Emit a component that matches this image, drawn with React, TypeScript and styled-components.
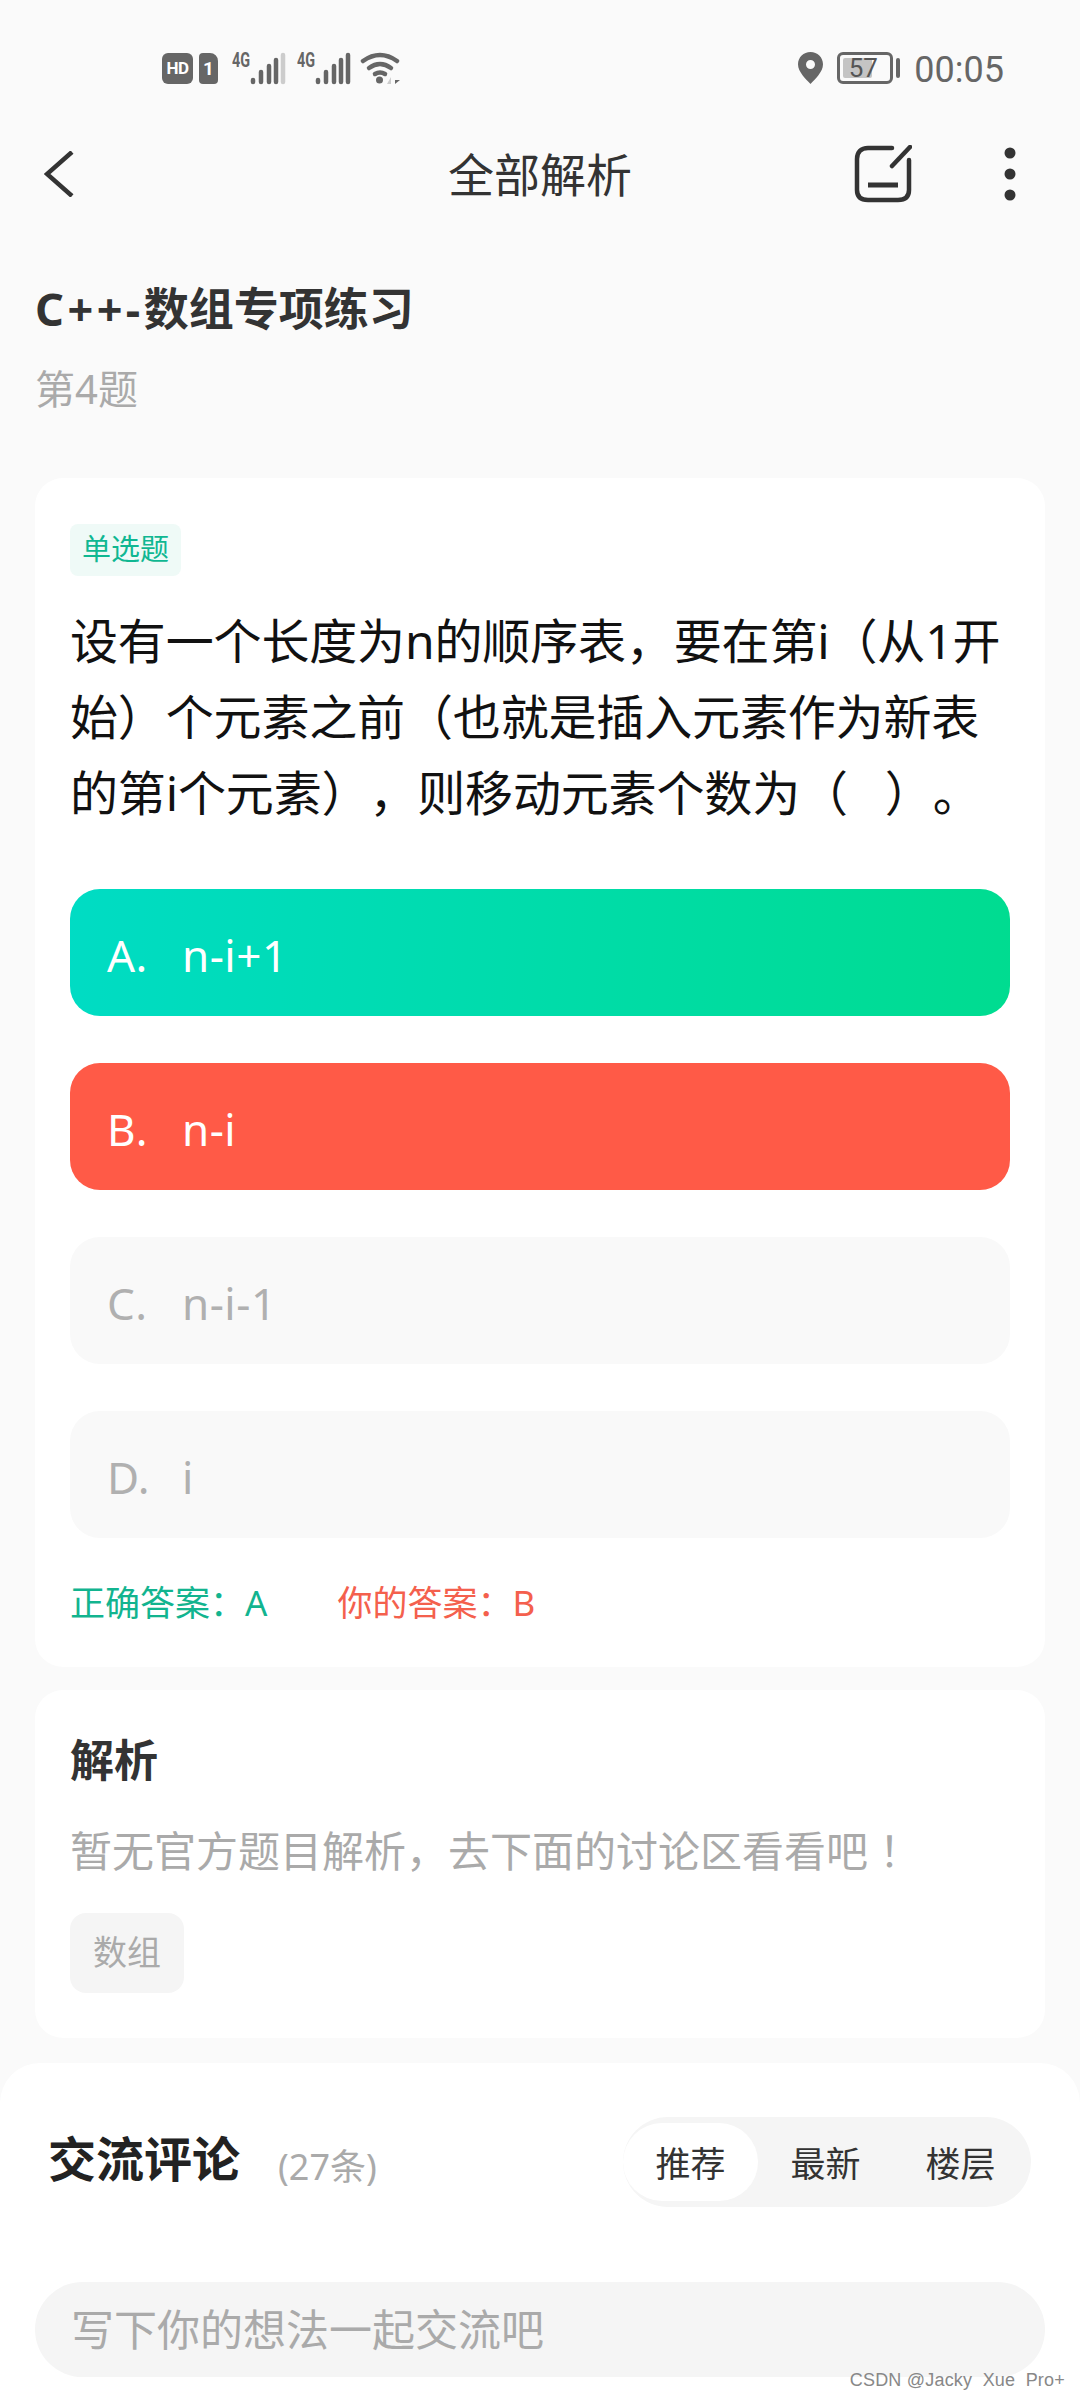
import * as React from 'react';
import styled, { createGlobalStyle } from 'styled-components';

const GlobalStyle = createGlobalStyle`
  html, body {
    margin: 0;
    padding: 0;
    background: #fafafa;
  }
  body {
    font-family: "Noto Sans", "Noto Sans CJK SC", sans-serif;
    text-spacing-trim: space-all;
  }
`;

const Page = styled.div`
  position: relative;
  width: 1080px;
  height: 2400px;
  overflow: hidden;
  background: #fafafa;
`;

const StatusBar = styled.div`
  display: flex;
  align-items: center;
  justify-content: space-between;
  height: 32px;
  padding: 52px 76px 0 162px;
  color: #666;
`;

const StatusGroup = styled.div`
  display: flex;
  align-items: center;
`;

const Clock = styled.span`
  margin-left: 14px;
  padding-top: 3px;
  font-family: Roboto, sans-serif;
  font-size: 36px;
  line-height: 32px;
  color: #666;
`;

const HdBadge = styled.span`
  display: flex;
  align-items: center;
  justify-content: center;
  width: 31px;
  height: 31px;
  border-radius: 6px;
  background: #666;
  color: #fff;
  font-family: Roboto, sans-serif;
  font-size: 17px;
  font-weight: 700;
  letter-spacing: -0.5px;
`;

const SimBadge = styled.span`
  display: flex;
  align-items: center;
  justify-content: center;
  width: 19px;
  height: 31px;
  margin-left: 6px;
  border-radius: 4px 8px 4px 4px;
  background: #666;
  color: #fff;
  font-family: Roboto, sans-serif;
  font-size: 19px;
  font-weight: 700;
`;

const Signal = styled.span<{ $gap: number }>`
  display: flex;
  align-items: flex-start;
  margin-left: ${(p) => p.$gap}px;
`;

const NetLabel = styled.span`
  display: inline-block;
  width: 18px;
  font-family: Roboto, sans-serif;
  font-size: 20px;
  line-height: 16px;
  font-weight: 700;
  color: #666;
  transform: scaleX(0.72);
  transform-origin: left top;
`;

const Battery = styled.span`
  position: relative;
  display: flex;
  align-items: center;
  justify-content: center;
  box-sizing: border-box;
  width: 56px;
  height: 32px;
  margin-left: 14px;
  border: 3px solid #666;
  border-radius: 6px;
  font-family: Roboto, sans-serif;
  font-size: 26px;
  color: #555;
`;

const BatteryFill = styled.span`
  position: absolute;
  left: 3px;
  top: 3px;
  bottom: 3px;
  border-radius: 2px;
  background: #c4c4c4;
`;

const BatteryValue = styled.span`
  position: relative;
  margin-right: 4px;
`;

const BatteryNub = styled.span`
  width: 4px;
  height: 20px;
  margin-left: 3px;
  border-radius: 2px;
  background: #666;
`;

const Header = styled.div`
  position: relative;
  display: flex;
  align-items: center;
  height: 60px;
  margin-top: 60px;
  padding: 0 44px;
`;

const HeaderTitle = styled.div`
  position: absolute;
  left: 0;
  right: 0;
  text-align: center;
  font-size: 46px;
  line-height: 60px;
  color: #333;
`;

const HeaderActions = styled.div`
  display: flex;
  align-items: center;
  margin-left: auto;
  gap: 91px;
  padding-right: 19px;
`;

const Intro = styled.div`
  padding: 0 35px;
  margin-top: 75px;
`;

const PaperTitle = styled.div`
  font-size: 45px;
  line-height: 60px;
  font-weight: 700;
  color: #333;
`;

const PaperPrefix = styled.span`
  letter-spacing: 3.5px;
`;

const PaperIndex = styled.div`
  margin-top: 25px;
  font-size: 40px;
  line-height: 50px;
  color: #aaa;
`;

const Card = styled.div`
  margin: 0 35px;
  padding: 46px 35px 35px;
  background: #fff;
  border-radius: 28px;
`;

const QuestionCard = styled(Card)`
  margin-top: 64px;
  height: 1189px;
  box-sizing: border-box;
`;

const TypeTag = styled.span`
  display: inline-block;
  padding: 0 12px;
  height: 52px;
  line-height: 50px;
  border-radius: 8px;
  background: #effaf7;
  color: #10b792;
  font-size: 29px;
`;

const Question = styled.div`
  margin-top: 27px;
  font-size: 48px;
  line-height: 76px;
  letter-spacing: -0.15px;
  color: #111;
`;

const Options = styled.div`
  display: flex;
  flex-direction: column;
  gap: 47px;
  margin-top: 58px;
`;

const Option = styled.div<{ $state: 'right' | 'wrong' | 'idle' }>`
  display: flex;
  align-items: center;
  box-sizing: border-box;
  height: 127px;
  padding: 5px 37px 0;
  border-radius: 30px;
  font-size: 44px;
  letter-spacing: 0.5px;
  color: ${(p) => (p.$state === 'idle' ? '#b0b0b0' : '#fff')};
  background: ${(p) =>
    p.$state === 'right'
      ? 'linear-gradient(95deg, #00dcc4, #00dc90)'
      : p.$state === 'wrong'
        ? '#ff5a47'
        : '#f9f9f9'};
`;

const OptionKey = styled.span`
  width: 75px;
`;

const Answers = styled.div`
  display: flex;
  margin-top: 40px;
  font-size: 35px;
  line-height: 50px;
`;

const AnswerText = styled.span<{ $wrong?: boolean }>`
  margin-right: ${(p) => (p.$wrong ? 0 : 70)}px;
  color: ${(p) => (p.$wrong ? '#f4604d' : '#12b48f')};
`;

const AnalysisCard = styled(Card)`
  margin-top: 23px;
  height: 348px;
  box-sizing: border-box;
  padding-top: 40px;
`;

const AnalysisTitle = styled.div`
  font-size: 44px;
  line-height: 60px;
  font-weight: 700;
  color: #333;
`;

const AnalysisText = styled.div`
  margin-top: 31px;
  font-size: 42px;
  line-height: 60px;
  color: #aaa;
`;

const Chip = styled.span`
  display: inline-block;
  margin-top: 32px;
  padding: 0 23px;
  height: 80px;
  line-height: 78px;
  border-radius: 16px;
  background: #f5f5f5;
  color: #aaa;
  font-size: 34px;
`;

const Sheet = styled.div`
  margin-top: 25px;
  height: 337px;
  padding: 54px 35px 0;
  background: #fff;
  border-radius: 40px 40px 0 0;
`;

const SheetHead = styled.div`
  display: flex;
  align-items: center;
  height: 90px;
  padding-right: 14px;
`;

const SheetTitle = styled.div`
  margin-left: 13px;
  font-size: 48px;
  line-height: 60px;
  font-weight: 700;
  color: #222;
  margin-bottom: 6px;
`;

const SheetCount = styled.div`
  margin-left: 38px;
  margin-top: 4px;
  font-size: 36px;
  color: #aaa;
`;

const SortTabs = styled.div`
  display: flex;
  margin-left: auto;
  width: 408px;
  height: 90px;
  padding: 6px 0;
  box-sizing: border-box;
  border-radius: 45px;
  background: #f5f5f5;
`;

const SortTab = styled.div<{ $active?: boolean }>`
  width: 135px;
  text-align: center;
  font-size: 35px;
  line-height: 82px;
  color: #333;
  border-radius: 39px;
  background: ${(p) => (p.$active ? '#fff' : 'transparent')};
`;

const CommentInput = styled.div`
  margin-top: 75px;
  height: 95px;
  padding-left: 36px;
  border-radius: 48px;
  background: #f5f5f5;
  font-size: 43px;
  line-height: 95px;
  color: #aaa;
`;

const Watermark = styled.div`
  position: absolute;
  right: 15px;
  bottom: 10px;
  font-family: "Liberation Sans", sans-serif;
  font-size: 18px;
  line-height: 20px;
  letter-spacing: 0.2px;
  color: #888;
  white-space: pre;
`;

function SignalBars({ lastDim }: { lastDim?: boolean }) {
  return (
    <svg width="36" height="33" viewBox="0 0 36 33">
      <g strokeWidth="4.5" strokeLinecap="round" stroke="#666">
        <line x1="3" y1="28" x2="3" y2="30" />
        <line x1="11" y1="20" x2="11" y2="30" />
        <line x1="19" y1="14" x2="19" y2="30" />
        <line x1="26" y1="8" x2="26" y2="30" />
        <line x1="33" y1="3" x2="33" y2="30" stroke={lastDim ? '#ccc' : '#666'} />
      </g>
    </svg>
  );
}

function WifiIcon() {
  return (
    <svg width="41" height="33" viewBox="0 0 41 33" style={{ marginLeft: 9 }}>
      <g fill="none" stroke="#666" strokeWidth="4.5" strokeLinecap="round">
        <path d="M3 9Q20 -3 37 9" />
        <path d="M9 16Q20 8 31 16" />
        <path d="M15 22Q20 19 25 22" />
      </g>
      <circle cx="19.5" cy="28" r="3.5" fill="#666" />
      <path d="M31 25v7h-4z" fill="#ccc" />
      <path d="M35 25v3h5l-5 4z" fill="#666" />
    </svg>
  );
}

function PinIcon() {
  return (
    <svg width="25" height="32" viewBox="0 0 25 32">
      <path
        fillRule="evenodd"
        fill="#666"
        d="M12.5 0C5.6 0 0 5.4 0 12.2 0 20 8 27 12.5 32 17 27 25 20 25 12.2 25 5.4 19.4 0 12.5 0ZM12.5 8a4.5 4.5 0 1 1 0 9 4.5 4.5 0 0 1 0-9Z"
      />
    </svg>
  );
}

function BackIcon() {
  return (
    <svg width="30" height="46" viewBox="0 0 30 46">
      <path d="M28 1 3 23l25 22" fill="none" stroke="#333" strokeWidth="4.5" />
    </svg>
  );
}

function NoteIcon() {
  return (
    <svg width="58" height="58" viewBox="0 0 58 58">
      <g fill="none" stroke="#333" strokeWidth="4.5" strokeLinecap="round">
        <path d="M38 3H14C7 3 3 7 3 14V45C3 52 7 55 14 55H44C51 55 55 52 55 45V15" />
        <path d="M56 2 38 21" />
        <path d="M14 40H44" strokeWidth="5" strokeLinecap="butt" />
      </g>
    </svg>
  );
}

function MoreIcon() {
  return (
    <svg width="14" height="54" viewBox="0 0 14 54">
      <circle cx="7" cy="6" r="5.5" fill="#333" />
      <circle cx="7" cy="27" r="5.5" fill="#333" />
      <circle cx="7" cy="48" r="5.5" fill="#333" />
    </svg>
  );
}

const options: { key: string; text: string; state: 'right' | 'wrong' | 'idle' }[] = [
  { key: 'A.', text: 'n-i+1', state: 'right' },
  { key: 'B.', text: 'n-i', state: 'wrong' },
  { key: 'C.', text: 'n-i-1', state: 'idle' },
  { key: 'D.', text: 'i', state: 'idle' },
];

export default function App() {
  return (
    <Page>
      <GlobalStyle />
      <StatusBar>
        <StatusGroup>
          <HdBadge>HD</HdBadge>
          <SimBadge>1</SimBadge>
          <Signal $gap={14}>
            <NetLabel>4G</NetLabel>
            <SignalBars lastDim />
          </Signal>
          <Signal $gap={11}>
            <NetLabel>4G</NetLabel>
            <SignalBars />
          </Signal>
          <WifiIcon />
        </StatusGroup>
        <StatusGroup>
          <PinIcon />
          <Battery>
            <BatteryFill style={{ width: '57%' }} />
            <BatteryValue>57</BatteryValue>
          </Battery>
          <BatteryNub />
          <Clock>00:05</Clock>
        </StatusGroup>
      </StatusBar>

      <Header>
        <BackIcon />
        <HeaderTitle>全部解析</HeaderTitle>
        <HeaderActions>
          <NoteIcon />
          <MoreIcon />
        </HeaderActions>
      </Header>

      <Intro>
        <PaperTitle>
          <PaperPrefix>C++-</PaperPrefix>数组专项练习
        </PaperTitle>
        <PaperIndex>第4题</PaperIndex>
      </Intro>

      <QuestionCard>
        <TypeTag>单选题</TypeTag>
        <Question>
          设有一个长度为n的顺序表，要在第i（从1开始）个元素之前（也就是插入元素作为新表的第i个元素），则移动元素个数为（ &nbsp; ）。
        </Question>
        <Options>
          {options.map((o) => (
            <Option key={o.key} $state={o.state}>
              <OptionKey>{o.key}</OptionKey>
              {o.text}
            </Option>
          ))}
        </Options>
        <Answers>
          <AnswerText>正确答案：A</AnswerText>
          <AnswerText $wrong>你的答案：B</AnswerText>
        </Answers>
      </QuestionCard>

      <AnalysisCard>
        <AnalysisTitle>解析</AnalysisTitle>
        <AnalysisText>暂无官方题目解析，去下面的讨论区看看吧 ！</AnalysisText>
        <Chip>数组</Chip>
      </AnalysisCard>

      <Sheet>
        <SheetHead>
          <SheetTitle>交流评论</SheetTitle>
          <SheetCount>(27条)</SheetCount>
          <SortTabs>
            <SortTab $active>推荐</SortTab>
            <SortTab>最新</SortTab>
            <SortTab>楼层</SortTab>
          </SortTabs>
        </SheetHead>
        <CommentInput>写下你的想法一起交流吧</CommentInput>
      </Sheet>

      <Watermark>CSDN @Jacky  Xue  Pro+</Watermark>
    </Page>
  );
}
